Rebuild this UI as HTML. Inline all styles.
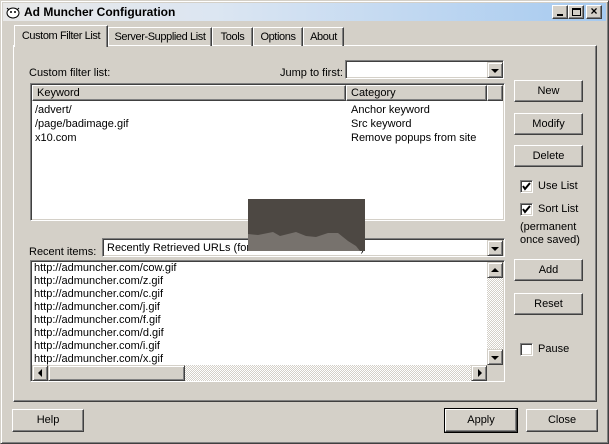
<!DOCTYPE html>
<html><head><meta charset="utf-8"><style>
*{box-sizing:border-box;margin:0;padding:0}
body{width:609px;height:444px;background:#d4d0c8;font-family:"Liberation Sans",sans-serif;font-size:11px;color:#000;position:relative;overflow:hidden}
.a{position:absolute}
.win{left:0;top:0;width:609px;height:444px;border:1px solid;border-color:#d4d0c8 #404040 #404040 #d4d0c8;box-shadow:inset 1px 1px #fff,inset -1px -1px #808080}
.title{left:3px;top:3px;width:603px;height:18px;background:linear-gradient(90deg,#e8e8e8 0%,#dce6f2 35%,#a6caf0 100%)}
.btn{background:#d4d0c8;border:1px solid;border-color:#fff #404040 #404040 #fff;box-shadow:inset -1px -1px #808080;text-align:center}
.sunk{background:#fff;border:1px solid;border-color:#808080 #fff #fff #808080;box-shadow:inset 1px 1px #404040,inset -1px -1px #d4d0c8}
.tab{top:27px;height:19px;border:1px solid;border-bottom:none;border-color:#fff #404040 #404040 #fff;box-shadow:inset -1px 0 #808080;padding:3px 0 0;white-space:nowrap;text-align:center;letter-spacing:-0.4px;overflow:hidden}
.sb{background:#d4d0c8;border:1px solid;border-color:#d4d0c8 #404040 #404040 #d4d0c8;box-shadow:inset 1px 1px #fff,inset -1px -1px #808080;width:16px;height:16px}
.chk{width:13px;height:13px;background:#fff;border:1px solid;border-color:#808080 #fff #fff #808080;box-shadow:inset 1px 1px #404040,inset -1px -1px #d4d0c8}
.row{line-height:14px;white-space:nowrap}
.tri{width:0;height:0;border-left:4px solid transparent;border-right:4px solid transparent;position:absolute;left:3px}
</style></head><body>
<div class="a win"></div>
<div class="a title"></div>
<svg class="a" style="left:5px;top:4px" width="16" height="16"><ellipse cx="8" cy="9" rx="6" ry="5" fill="#fff" stroke="#000"/><circle cx="6" cy="8" r="1" fill="#000"/><circle cx="10" cy="8" r="1" fill="#000"/><path d="M2 4 L4 6 M14 4 L12 6" stroke="#000"/></svg>
<div class="a" style="left:24px;top:5px;font-weight:bold;font-size:12px">Ad Muncher Configuration</div>
<div class="a btn" style="left:552px;top:5px;width:16px;height:14px"><div class="a" style="left:4px;top:8px;width:6px;height:2px;background:#000"></div></div>
<div class="a btn" style="left:568px;top:5px;width:16px;height:14px"><div class="a" style="left:3px;top:2px;width:9px;height:8px;border:1px solid #000;border-top-width:2px"></div></div>
<div class="a btn" style="left:586px;top:5px;width:16px;height:14px;font-size:12px;line-height:11px;font-weight:bold">×</div>

<div class="a" style="left:13px;top:45px;width:584px;height:357px;border:1px solid;border-color:#fff #404040 #404040 #fff;box-shadow:inset -1px -1px #808080"></div>
<div class="a tab" style="left:108px;width:104px">Server-Supplied List</div>
<div class="a tab" style="left:212px;width:41px">Tools</div>
<div class="a tab" style="left:253px;width:50px">Options</div>
<div class="a tab" style="left:303px;width:41px">About</div>
<div class="a tab" style="left:14px;top:25px;height:22px;width:94px;background:#d4d0c8;padding-top:4px">Custom Filter List</div>

<div class="a" style="left:29px;top:67px">Custom filter list:</div>
<div class="a" style="left:280px;top:67px">Jump to first:</div>
<div class="a sunk" style="left:345px;top:60px;width:159px;height:19px"></div>
<div class="a sb" style="left:487px;top:62px"><div class="tri" style="top:6px;border-top:4px solid #000"></div></div>

<div class="a sunk" style="left:30px;top:83px;width:475px;height:138px"></div>
<div class="a btn" style="left:32px;top:85px;width:314px;height:16px;text-align:left;padding:1px 0 0 4px">Keyword</div>
<div class="a btn" style="left:346px;top:85px;width:141px;height:16px;text-align:left;padding:1px 0 0 4px">Category</div>
<div class="a btn" style="left:487px;top:85px;width:16px;height:16px"></div>
<div class="a row" style="left:35px;top:103px">/advert/<br>/page/badimage.gif<br>x10.com</div>
<div class="a row" style="left:351px;top:103px">Anchor keyword<br>Src keyword<br>Remove popups from site</div>

<div class="a btn" style="left:514px;top:80px;width:69px;height:22px;line-height:20px">New</div>
<div class="a btn" style="left:514px;top:113px;width:69px;height:22px;line-height:20px">Modify</div>
<div class="a btn" style="left:514px;top:145px;width:69px;height:22px;line-height:20px">Delete</div>
<div class="a chk" style="left:520px;top:180px"><svg width="11" height="11" style="position:absolute;left:0;top:0"><path d="M2 5 L4 8 L9 2" stroke="#000" stroke-width="2" fill="none"/></svg></div>
<div class="a" style="left:538px;top:180px">Use List</div>
<div class="a chk" style="left:520px;top:203px"><svg width="11" height="11" style="position:absolute;left:0;top:0"><path d="M2 5 L4 8 L9 2" stroke="#000" stroke-width="2" fill="none"/></svg></div>
<div class="a" style="left:538px;top:203px">Sort List</div>
<div class="a" style="left:520px;top:221px;line-height:13px">(permanent<br>once saved)</div>
<div class="a btn" style="left:514px;top:259px;width:69px;height:22px;line-height:20px">Add</div>
<div class="a btn" style="left:514px;top:293px;width:69px;height:22px;line-height:20px">Reset</div>
<div class="a chk" style="left:520px;top:343px"></div>
<div class="a" style="left:538px;top:343px">Pause</div>

<div class="a" style="left:29px;top:246px">Recent items:</div>
<div class="a sunk" style="left:102px;top:238px;width:403px;height:19px;padding:3px 0 0 4px;white-space:nowrap;overflow:hidden">Recently Retrieved URLs (for use in shortcut entries)</div>
<div class="a sb" style="left:487px;top:240px"><div class="tri" style="top:6px;border-top:4px solid #000"></div></div>

<div class="a sunk" style="left:30px;top:260px;width:475px;height:122px"></div>
<div class="a row" style="left:34px;top:262px;line-height:13px">http://admuncher.com/cow.gif<br>http://admuncher.com/z.gif<br>http://admuncher.com/c.gif<br>http://admuncher.com/j.gif<br>http://admuncher.com/f.gif<br>http://admuncher.com/d.gif<br>http://admuncher.com/i.gif<br>http://admuncher.com/x.gif</div>
<div class="a" style="left:487px;top:262px;width:16px;height:103px;background:repeating-conic-gradient(#fff 0 25%,#d4d0c8 0 50%) 0 0/2px 2px"></div>
<div class="a sb" style="left:487px;top:262px"><div class="tri" style="top:5px;border-bottom:4px solid #000"></div></div>
<div class="a sb" style="left:487px;top:349px"><div class="tri" style="top:6px;border-top:4px solid #000"></div></div>
<div class="a" style="left:32px;top:365px;width:455px;height:16px;background:repeating-conic-gradient(#fff 0 25%,#d4d0c8 0 50%) 0 0/2px 2px"></div>
<div class="a sb" style="left:32px;top:365px"><div class="tri" style="left:5px;top:3px;border:4px solid transparent;border-right:4px solid #000;border-left:none"></div></div>
<div class="a sb" style="left:48px;top:365px;width:137px"></div>
<div class="a sb" style="left:471px;top:365px"><div class="tri" style="left:6px;top:3px;border:4px solid transparent;border-left:4px solid #000;border-right:none"></div></div>
<div class="a" style="left:487px;top:365px;width:16px;height:16px;background:#d4d0c8"></div>

<svg class="a" style="left:248px;top:199px" width="117" height="52"><rect width="117" height="52" fill="#4d4843"/><path d="M0 35 L10 36 L25 33 L32 37 L48 33 L58 37 L68 38 L80 34 L90 34 L100 42 L108 47 L112 52 L0 52Z" fill="#77726d"/></svg>

<div class="a btn" style="left:12px;top:409px;width:72px;height:23px;line-height:21px">Help</div>
<div class="a" style="left:444px;top:408px;width:74px;height:25px;border:1px solid #000"></div>
<div class="a btn" style="left:445px;top:409px;width:72px;height:23px;line-height:21px">Apply</div>
<div class="a btn" style="left:526px;top:409px;width:72px;height:23px;line-height:21px">Close</div>
</body></html>
